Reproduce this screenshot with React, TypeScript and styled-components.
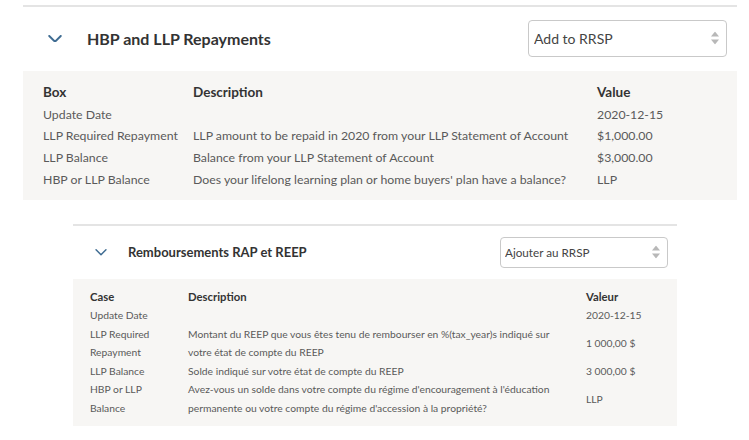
import React from "react";
import styled, { createGlobalStyle } from "styled-components";

type Row = {
  box: string;
  description: string;
  value: string;
};

const englishRows: Row[] = [
  { box: "Update Date", description: "", value: "2020-12-15" },
  {
    box: "LLP Required Repayment",
    description: "LLP amount to be repaid in 2020 from your LLP Statement of Account",
    value: "$1,000.00",
  },
  {
    box: "LLP Balance",
    description: "Balance from your LLP Statement of Account",
    value: "$3,000.00",
  },
  {
    box: "HBP or LLP Balance",
    description: "Does your lifelong learning plan or home buyers' plan have a balance?",
    value: "LLP",
  },
];

const frenchRows: Row[] = [
  { box: "Update Date", description: "", value: "2020-12-15" },
  {
    box: "LLP Required Repayment",
    description:
      "Montant du REEP que vous êtes tenu de rembourser en %(tax_year)s indiqué sur votre état de compte du REEP",
    value: "1 000,00 $",
  },
  {
    box: "LLP Balance",
    description: "Solde indiqué sur votre état de compte du REEP",
    value: "3 000,00 $",
  },
  {
    box: "HBP or LLP Balance",
    description:
      "Avez-vous un solde dans votre compte du régime d'encouragement à l'éducation permanente ou votre compte du régime d'accession à la propriété?",
    value: "LLP",
  },
];

type Size = "large" | "small";

const Chevron = ({ size }: { size: Size }) => {
  const w = size === "large" ? 14 : 12;
  return (
    <svg width={w} height={w * 0.55} viewBox="0 0 14 8" fill="none">
      <polyline
        points="1,1 7,7 13,1"
        stroke="#3f6c92"
        strokeWidth={size === "large" ? 2 : 1.8}
        strokeLinecap="round"
        strokeLinejoin="round"
      />
    </svg>
  );
};

const UpDown = () => (
  <svg width="8" height="13" viewBox="0 0 8 13">
    <polygon points="4,0 8,5 0,5" fill="#b8b8b8" />
    <polygon points="4,13 8,8 0,8" fill="#b8b8b8" />
  </svg>
);

function Section({
  size,
  title,
  option,
  headers,
  rows,
}: {
  size: Size;
  title: string;
  option: string;
  headers: [string, string, string];
  rows: Row[];
}) {
  return (
    <Panel $size={size}>
      <Header $size={size}>
        <Toggle $size={size}>
          <Chevron size={size} />
        </Toggle>
        <Title $size={size}>{title}</Title>
        <SelectWrap $size={size}>
          <Select $size={size} defaultValue={option}>
            <option>{option}</option>
          </Select>
          <Arrows>
            <UpDown />
          </Arrows>
        </SelectWrap>
      </Header>
      <Body $size={size}>
        <Table $size={size}>
          <colgroup>
            <col className="c-box" />
            <col className="c-desc" />
            <col />
          </colgroup>
          <thead>
            <tr>
              {headers.map((h) => (
                <th key={h}>{h}</th>
              ))}
            </tr>
          </thead>
          <tbody>
            {rows.map((r) => (
              <tr key={r.box}>
                <td>{r.box}</td>
                <td>{r.description}</td>
                <td>{r.value}</td>
              </tr>
            ))}
          </tbody>
        </Table>
      </Body>
    </Panel>
  );
}

function App() {
  return (
    <>
      <GlobalStyle />
      <Page>
        <Section
          size="large"
          title="HBP and LLP Repayments"
          option="Add to RRSP"
          headers={["Box", "Description", "Value"]}
          rows={englishRows}
        />
        <Section
          size="small"
          title="Remboursements RAP et REEP"
          option="Ajouter au RRSP"
          headers={["Case", "Description", "Valeur"]}
          rows={frenchRows}
        />
      </Page>
    </>
  );
}

const GlobalStyle = createGlobalStyle`
  html, body {
    margin: 0;
    background: #ffffff;
  }
  body {
    font-family: Lato, "Open Sans", sans-serif;
    color: #555;
  }
`;

const Page = styled.main`
  display: flex;
  flex-direction: column;
  padding-top: 5px;
`;

const Panel = styled.section<{ $size: Size }>`
  border-top: 2px solid #e4e4e4;
  margin-left: ${(p) => (p.$size === "large" ? "23px" : "73px")};
  width: ${(p) => (p.$size === "large" ? "714px" : "604px")};
  margin-top: ${(p) => (p.$size === "large" ? "0" : "24px")};
`;

const Header = styled.div<{ $size: Size }>`
  display: flex;
  align-items: center;
  height: ${(p) => (p.$size === "large" ? "64px" : "53px")};
  padding-right: ${(p) => (p.$size === "large" ? "10px" : "9px")};
  padding-bottom: ${(p) => (p.$size === "large" ? "2px" : "0")};
  box-sizing: border-box;
  background: #fff;
`;

const Toggle = styled.div<{ $size: Size }>`
  display: flex;
  align-items: center;
  width: ${(p) => (p.$size === "large" ? "64px" : "55px")};
  padding-left: ${(p) => (p.$size === "large" ? "25px" : "22px")};
  box-sizing: border-box;
  margin-top: 1px;
`;

const Title = styled.h2<{ $size: Size }>`
  flex: 1;
  margin: 0;
  font-size: ${(p) => (p.$size === "large" ? "16px" : "13px")};
  font-weight: 700;
  color: #333;
`;

const SelectWrap = styled.div<{ $size: Size }>`
  position: relative;
  width: ${(p) => (p.$size === "large" ? "199px" : "168px")};
  height: ${(p) => (p.$size === "large" ? "37px" : "31px")};
`;

const Select = styled.select<{ $size: Size }>`
  appearance: none;
  width: 100%;
  height: 100%;
  border: 1px solid #c9c9c9;
  border-radius: 4px;
  background: #fff;
  font-family: Lato, "Open Sans", sans-serif;
  font-size: ${(p) => (p.$size === "large" ? "14px" : "11.7px")};
  color: #444;
  padding: 0 ${(p) => (p.$size === "large" ? "5px" : "4px")};
`;

const Arrows = styled.span`
  position: absolute;
  right: 8px;
  top: 50%;
  transform: translateY(-50%);
  display: flex;
  pointer-events: none;
`;

const Body = styled.div<{ $size: Size }>`
  background: #f7f6f4;
  padding: ${(p) =>
    p.$size === "large" ? "11px 20px 9px 20px" : "9px 17px 8px 17px"};
`;

const Table = styled.table<{ $size: Size }>`
  border-collapse: collapse;
  width: 100%;
  font-size: ${(p) => (p.$size === "large" ? "12.3px" : "10.3px")};
  line-height: ${(p) => (p.$size === "large" ? "21.7px" : "18.6px")};

  col.c-box {
    width: ${(p) => (p.$size === "large" ? "150px" : "98px")};
  }
  col.c-desc {
    width: ${(p) => (p.$size === "large" ? "404px" : "398px")};
  }

  th {
    text-align: left;
    font-weight: 700;
    color: #333;
    font-size: ${(p) => (p.$size === "large" ? "13.5px" : "11.3px")};
    padding: 0;
  }

  td {
    padding: 0;
    vertical-align: middle;
    color: #5a5a5a;
  }

  td:nth-child(1) {
    padding-right: ${(p) => (p.$size === "large" ? "0" : "30px")};
  }

  td:nth-child(2) {
    padding-right: ${(p) => (p.$size === "large" ? "0" : "20px")};
  }
`;

export default App;
